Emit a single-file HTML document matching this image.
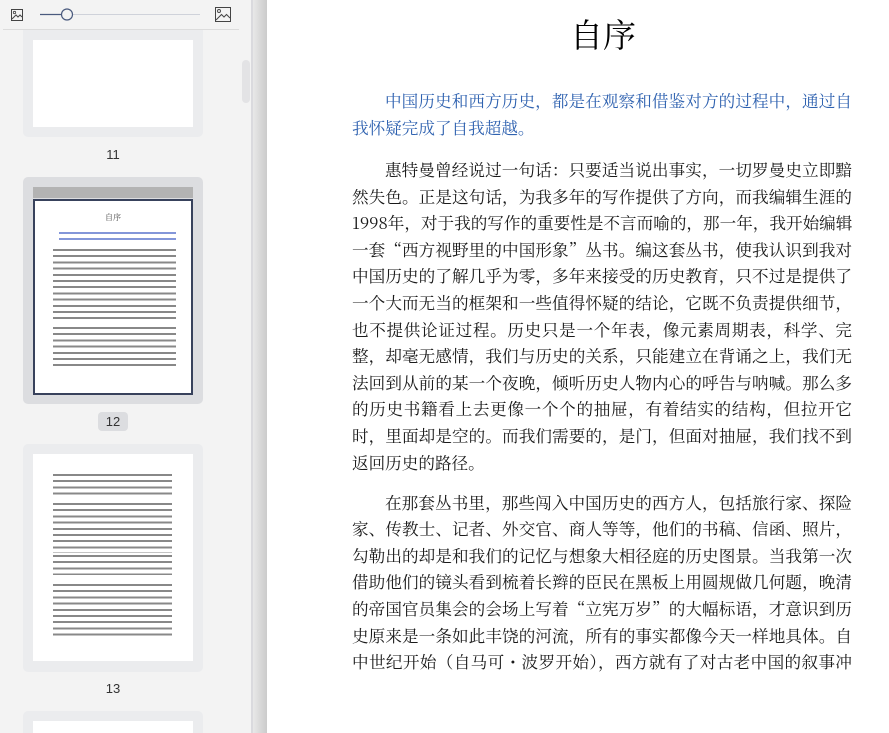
<!DOCTYPE html>
<html><head><meta charset="utf-8"><style>
*{margin:0;padding:0;box-sizing:border-box}
html,body{width:889px;height:733px;overflow:hidden}
body{background:#fff;position:relative;font-family:"Noto Serif CJK SC","Liberation Serif",serif}
#side{position:absolute;left:0;top:0;width:251px;height:733px;background:#f3f3f3;overflow:hidden}
#div1{position:absolute;left:251px;top:0;width:2px;height:733px;background:#dadade}
#div2{position:absolute;left:253px;top:0;width:14px;height:733px;background:linear-gradient(90deg,#e8e8e8,#cbcbcb)}
.card{position:absolute;left:23px;width:180px;background:#ebecee;border-radius:5px}
.pg{position:absolute;left:33px;width:160px;background:#fff}
.lbl{position:absolute;left:0;width:226px;text-align:center;font:13px "Liberation Sans",sans-serif;color:#333}
.tx{position:absolute;background:repeating-linear-gradient(180deg,#555 0 2px,transparent 2px 6.2px);opacity:.7}
.ln{position:absolute;left:352px;width:500px;font-size:16.6px;line-height:26.6px;height:26.6px;color:#1a1a1a;text-align:justify;text-align-last:justify;white-space:nowrap;font-family:"Noto Serif CJK SC","Liberation Serif",serif}
.ln.l{text-align-last:left}
.in{left:385px;width:467px}
.b{color:#2f62b0}
</style></head><body>
<div id="side">
 <svg style="position:absolute;left:0;top:0" width="250" height="32">
  <rect x="11.5" y="9.5" width="11" height="11" fill="none" stroke="#444" stroke-width="1"/>
  <circle cx="14.5" cy="12.5" r="1.2" fill="none" stroke="#444" stroke-width=".8"/>
  <path d="M12 19 L16 15 L18 17 L20 15 L22 17" fill="none" stroke="#444" stroke-width="1"/>
  <rect x="215.5" y="7.5" width="15" height="14" fill="none" stroke="#444" stroke-width="1"/>
  <circle cx="219" cy="11" r="1.5" fill="none" stroke="#444" stroke-width=".9"/>
  <path d="M216 20 L221.5 14.5 L224 17 L226.5 14.5 L230 18" fill="none" stroke="#444" stroke-width="1"/>
  <line x1="40" y1="14.5" x2="62" y2="14.5" stroke="#4a5a7e" stroke-width="1.2"/>
  <line x1="72" y1="14.5" x2="200" y2="14.5" stroke="#cfd2da" stroke-width="1"/>
  <circle cx="67" cy="14.5" r="5.5" fill="#f3f3f3" stroke="#4a5a7e" stroke-width="1.2"/>
  <line x1="3" y1="29.5" x2="239" y2="29.5" stroke="#dcdcdc" stroke-width="1"/>
 </svg>
 <div style="position:absolute;left:242px;top:60px;width:8px;height:43px;border-radius:4px;background:#e3e3e5"></div>
 <div class="card" style="top:30px;height:107px;border-radius:0 0 5px 5px"></div>
 <div class="pg" style="top:40px;height:87px"></div>
 <div class="lbl" style="top:147px">11</div>

 <div class="card" style="top:177px;height:227px;background:#dcdde0"></div>
 <div style="position:absolute;left:33px;top:187px;width:160px;height:11px;background:#b3b3b3"></div>
 <div class="pg" style="top:199px;height:196px;border:2px solid #38425c"></div>
 <div style="position:absolute;left:105px;top:212px;font-size:8px;color:#444">自序</div>
 <div class="tx" style="left:59px;top:232px;width:117px;height:9px;background:repeating-linear-gradient(180deg,#3050c0 0 2px,transparent 2px 6.2px);opacity:.6"></div>
 <div class="tx" style="left:53px;top:249px;width:123px;height:72px"></div>
 <div class="tx" style="left:53px;top:327px;width:123px;height:40px"></div>
 <div style="position:absolute;left:98px;top:412px;width:30px;height:19px;border-radius:4px;background:#dcdde0"></div>
 <div class="lbl" style="top:414px">12</div>

 <div class="card" style="top:444px;height:228px"></div>
 <div class="pg" style="top:454px;height:207px"></div>
 <div class="tx" style="left:53px;top:474px;width:119px;height:24px"></div>
 <div class="tx" style="left:53px;top:503px;width:119px;height:50px"></div>
 <div class="tx" style="left:53px;top:555px;width:119px;height:20px"></div>
 <div class="tx" style="left:53px;top:584px;width:119px;height:54px"></div>
 <div class="lbl" style="top:681px">13</div>

 <div class="card" style="top:711px;height:40px"></div>
 <div class="pg" style="top:721px;height:20px"></div>
</div>
<div id="div1"></div><div id="div2"></div>

<div style="position:absolute;left:560px;top:12px;width:86px;text-align:center;font-size:33px;line-height:44px;color:#000">自序</div>

<div class="ln in b" style="top:87px">中国历史和西方历史，都是在观察和借鉴对方的过程中，通过自</div>
<div class="ln l b" style="top:113.6px">我怀疑完成了自我超越。</div>

<div class="ln in" style="top:156px">惠特曼曾经说过一句话：只要适当说出事实，一切罗曼史立即黯</div>
<div class="ln" style="top:182.6px">然失色。正是这句话，为我多年的写作提供了方向，而我编辑生涯的</div>
<div class="ln" style="top:209.2px">1998年，对于我的写作的重要性是不言而喻的，那一年，我开始编辑</div>
<div class="ln" style="top:235.8px">一套“西方视野里的中国形象”丛书。编这套丛书，使我认识到我对</div>
<div class="ln" style="top:262.4px">中国历史的了解几乎为零，多年来接受的历史教育，只不过是提供了</div>
<div class="ln" style="top:289px">一个大而无当的框架和一些值得怀疑的结论，它既不负责提供细节，</div>
<div class="ln" style="top:315.6px">也不提供论证过程。历史只是一个年表，像元素周期表，科学、完</div>
<div class="ln" style="top:342.2px">整，却毫无感情，我们与历史的关系，只能建立在背诵之上，我们无</div>
<div class="ln" style="top:368.8px">法回到从前的某一个夜晚，倾听历史人物内心的呼告与呐喊。那么多</div>
<div class="ln" style="top:395.4px">的历史书籍看上去更像一个个的抽屉，有着结实的结构，但拉开它</div>
<div class="ln" style="top:422px">时，里面却是空的。而我们需要的，是门，但面对抽屉，我们找不到</div>
<div class="ln l" style="top:448.6px">返回历史的路径。</div>

<div class="ln in" style="top:488.6px">在那套丛书里，那些闯入中国历史的西方人，包括旅行家、探险</div>
<div class="ln" style="top:515.2px">家、传教士、记者、外交官、商人等等，他们的书稿、信函、照片，</div>
<div class="ln" style="top:541.8px">勾勒出的却是和我们的记忆与想象大相径庭的历史图景。当我第一次</div>
<div class="ln" style="top:568.4px">借助他们的镜头看到梳着长辫的臣民在黑板上用圆规做几何题，晚清</div>
<div class="ln" style="top:595px">的帝国官员集会的会场上写着“立宪万岁”的大幅标语，才意识到历</div>
<div class="ln" style="top:621.6px">史原来是一条如此丰饶的河流，所有的事实都像今天一样地具体。自</div>
<div class="ln" style="top:648.2px">中世纪开始（自马可・波罗开始），西方就有了对古老中国的叙事冲</div>
</body></html>
